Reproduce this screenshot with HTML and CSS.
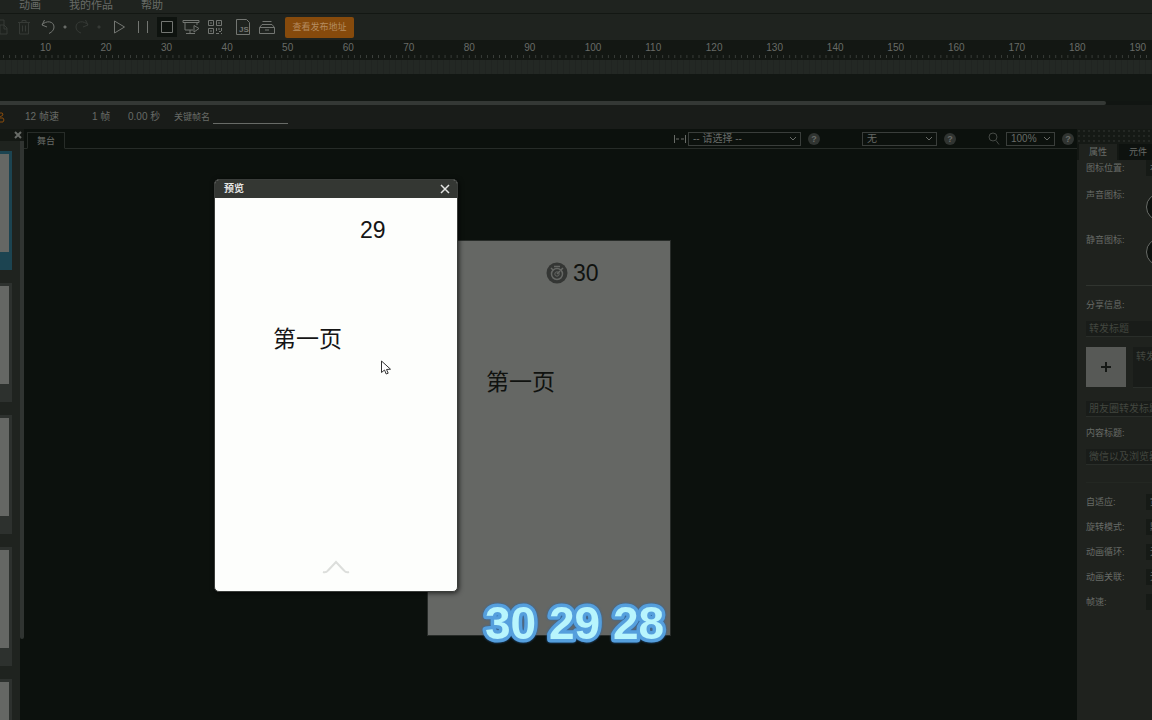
FILE: index.html
```html
<!DOCTYPE html>
<html lang="zh-CN">
<head>
<meta charset="utf-8">
<title>预览</title>
<link rel="stylesheet" href="styles.css">
</head>
<body>
<nav class="menu"><a href="#">动画</a><a href="#">我的作品</a><a href="#">帮助</a></nav>

<div class="toolbar">
  <button class="tool dim" aria-label="复制"><svg width="20" height="20" viewBox="0 0 20 20"><path d="M8 3h6v5M10 8h4l3 3v6h-7zM14 8v4h3"/></svg></button>
  <button class="tool dim" aria-label="删除"><svg width="20" height="20" viewBox="0 0 20 20"><path d="M4 5.500h12M8 5V3.500h4V5M5.500 6v11h9V6M8.500 8.500v6M11.500 8.500v6"/></svg></button>
  <button class="tool" aria-label="撤销"><svg width="20" height="20" viewBox="0 0 20 20"><path d="M6.500 3L4 8l5 2M4 8c4-5 12-4 12 2 0 3-2 5-5 6.500"/></svg></button>
  <span class="dot"></span>
  <button class="tool dim" aria-label="重做"><svg width="20" height="20" viewBox="0 0 20 20"><path d="M13.500 3L16 8l-5 2M16 8C12 3 4 4 4 10c0 3 2 5 5 6"/></svg></button>
  <span class="dot faint"></span>
  <button class="tool play" aria-label="播放"><svg width="20" height="20" viewBox="0 0 20 20"><path d="M5.500 4v12L15.500 10z"/></svg></button>
  <button class="tool" aria-label="暂停"><svg width="20" height="20" viewBox="0 0 20 20"><path d="M5.500 4v12M14.500 4v12"/></svg></button>
  <button class="tool active" aria-label="停止"><svg width="20" height="20" viewBox="0 0 20 20"><path d="M4.500 4.500h11v11h-11z"/></svg></button>
  <button class="tool" aria-label="预览"><svg width="20" height="20" viewBox="0 0 20 20"><path d="M2 3.500h16v2H2zM4 6v7h8M16 6v2M9 13v3.500M5 16.500h9M13 8.500l5 3-5 3.500z"/></svg></button>
  <button class="tool" aria-label="二维码"><svg width="20" height="20" viewBox="0 0 20 20"><path d="M3.500 3.500h5v5h-5zM11.500 3.500h5v5h-5zM3.500 11.500h5v5h-5zM5 6h2M13 6h2M5 14h2M11.500 11v3M14 11v2M16.500 11v3M11 16.500h3M16 16.500h1M14 14.500h2"/></svg></button>
  <button class="tool js" aria-label="脚本"><svg width="20" height="20" viewBox="0 0 20 20"><path d="M3.500 2.500h10l3 3v12h-13z"/><text x="6" y="15">JS</text></svg></button>
  <button class="tool" aria-label="素材"><svg width="20" height="20" viewBox="0 0 20 20"><path d="M5.500 4.500h9M5 7.500h10l2.500 3M2.500 10.500L5 7.500M2.500 10.500h15v6h-15zM8 13h4"/></svg></button>
  <button class="publish">查看发布地址</button>
</div>

<section class="timeline">
  <div class="ruler"><div class="marks">
    <span>10</span><span>20</span><span>30</span><span>40</span><span>50</span><span>60</span><span>70</span><span>80</span><span>90</span><span>100</span><span>110</span><span>120</span><span>130</span><span>140</span><span>150</span><span>160</span><span>170</span><span>180</span><span>190</span>
  </div></div>
  <div class="frames"></div>
  <div class="layer"></div>
  <div class="hscroll"><div class="hthumb"></div></div>
</section>

<div class="info">
  <svg class="onion" width="5" height="12" viewBox="0 0 5 12"><path d="M0 2q3-1 3 2L0 6M0 7q4-1 4 2t-4 2"/></svg>
  <span class="fps">12 帧速</span><span class="frame">1 帧</span><span class="secs">0.00 秒</span>
  <label for="keyname">关键帧名</label><input id="keyname" type="text">
</div>

<main class="work">
  <aside class="pages">
    <div class="pages-head"><button aria-label="关闭"><svg width="8" height="8" viewBox="0 0 8 8"><path d="M1 1l6 6M7 1L1 7"/></svg></button></div>
    <div class="pages-body">
      <div class="cards">
        <div class="card current"><div class="thumb"></div></div>
        <div class="card"><div class="thumb"></div></div>
        <div class="card"><div class="thumb"></div></div>
        <div class="card"><div class="thumb"></div></div>
        <div class="card"><div class="thumb"></div></div>
      </div>
      <div class="vscroll"><div class="vthumb"></div></div>
    </div>
  </aside>

  <section class="center">
    <div class="stagebar">
      <button class="stage-tab">舞台</button>
      <svg class="fit" width="12" height="10" viewBox="0 0 12 10"><path d="M.5 1v8M11.500 1v8M2 5h3M7 5h3"/></svg>
      <div class="pick screen"><select aria-label="屏幕"><option>-- 请选择 --</option></select><svg width="10" height="8" viewBox="0 0 10 8"><path d="M2 2l3 3 3-3"/></svg></div>
      <button class="help">?</button>
      <div class="pick none"><select aria-label="辅助线"><option>无</option></select><svg width="10" height="8" viewBox="0 0 10 8"><path d="M2 2l3 3 3-3"/></svg></div>
      <button class="help">?</button>
      <svg class="lens" width="12" height="14" viewBox="0 0 12 14"><circle cx="5" cy="5" r="4"/><path d="M8 8.500l3 4"/></svg>
      <div class="pick zoom"><select aria-label="缩放"><option>100%</option></select><svg width="10" height="8" viewBox="0 0 10 8"><path d="M2 2l3 3 3-3"/></svg></div>
      <button class="help">?</button>
    </div>
    <div class="canvas">
      <div class="page">
        <div class="counter"><svg width="22" height="22" viewBox="0 0 22 22"><circle class="disc" cx="11" cy="11" r="10.500"/><circle class="ring" cx="11" cy="12" r="5.500"/><circle class="hub" cx="11" cy="12" r="2.200"/><path class="ring" d="M8 4.500h6M5 6l2 2M17 6l-2 2M11 12l3-3"/></svg><span>30</span></div>
        <p class="page-title">第一页</p>
      </div>
    </div>
  </section>

  <aside class="props">
    <div class="grip"></div>
    <div class="tabs"><button class="on">属性</button><button>元件</button></div>
    <form class="form">
      <div class="row first"><label for="pos">图标位置:</label><select id="pos"><option>右上</option></select></div>
      <div class="row icon"><span>声音图标:</span><button type="button" class="round" aria-label="声音图标"></button></div>
      <div class="row icon"><span>静音图标:</span><button type="button" class="round" aria-label="静音图标"></button></div>
      <hr class="rule">
      <label for="share" class="share-label">分享信息:</label>
      <input id="share" type="text" placeholder="转发标题">
      <div class="upload"><button type="button" class="add" aria-label="添加图片"><svg width="10" height="10" viewBox="0 0 10 10"><path d="M5 0v10M0 5h10"/></svg></button><textarea aria-label="转发描述" placeholder="转发描述"></textarea></div>
      <input type="text" aria-label="朋友圈转发标题" placeholder="朋友圈转发标题" class="friends">
      <label for="content" class="content-label">内容标题:</label>
      <input id="content" type="text" placeholder="微信以及浏览器标题">
      <hr class="rule faint">
      <div class="options">
        <div class="row"><label for="o1">自适应:</label><select id="o1"><option>宽度适配</option></select></div>
        <div class="row"><label for="o2">旋转模式:</label><select id="o2"><option>默认</option></select></div>
        <div class="row"><label for="o3">动画循环:</label><select id="o3"><option>无</option></select></div>
        <div class="row"><label for="o4">动画关联:</label><select id="o4"><option>无</option></select></div>
        <div class="row"><label for="o5">帧速:</label><input id="o5" type="text"></div>
      </div>
    </form>
  </aside>
</main>

<div class="dialog" role="dialog" aria-labelledby="dlg">
  <header><h2 id="dlg">预览</h2><button aria-label="关闭"><svg width="10" height="10" viewBox="0 0 10 10"><path d="M1 1l8 8M9 1L1 9"/></svg></button></header>
  <div class="preview">
    <span class="preview-count">29</span>
    <p class="preview-title">第一页</p>
    <svg class="up" width="28" height="14" viewBox="0 0 28 14"><path d="M1 12q3 1 5-1.500L14 2l8 8.500Q24 13 27 12"/></svg>
  </div>
</div>
<svg class="cursor" width="12" height="16" viewBox="0 0 12 16"><path d="M1.500 1v11.500l3-2.500 1.700 4 2-.8L6.500 9.500l4-.3z"/></svg>
<svg class="caption" width="190" height="52" viewBox="0 0 190 52"><text x="5" y="41">30 29 28</text></svg>
</body>
</html>
```
FILE: styles.css
```css
* { box-sizing: border-box; }
body {
  margin: 0;
  height: 100vh;
  display: flex;
  flex-direction: column;
  overflow: hidden;
  position: relative;
  background: #0c110d;
  color: #686b67;
  font: 9px/12px "Liberation Sans", "Noto Sans CJK SC", sans-serif;
}
button, input, select, textarea {
  font: inherit;
  color: inherit;
  background: none;
  border: 0;
  border-radius: 0;
  padding: 0;
  margin: 0;
  appearance: none;
  outline: 0;
}
svg { display: block; fill: none; stroke: currentColor; flex: none; }
h2, p { margin: 0; font-weight: normal; }

.menu {
  flex: none;
  display: flex;
  gap: 28px;
  height: 14px;
  padding-left: 19px;
  background: #1f231f;
  border-bottom: 1px solid #131713;
  font-size: 11px;
  line-height: 10px;
}
.menu a { color: inherit; text-decoration: none; }

.toolbar {
  flex: none;
  display: flex;
  align-items: center;
  gap: 4px;
  height: 26px;
  margin-left: -10px;
  background: #1f231f;
}
.tool { width: 20px; height: 20px; color: #737672; flex: none; }
.tool.dim { color: #363a36; }
.tool.active { background: #0e130f; }
.tool.play { margin-left: 3px; }
.tool.js { margin-left: 4px; }
.tool text { font-size: 8px; font-weight: bold; fill: currentColor; stroke: none; }
.dot { width: 6px; height: 6px; background: radial-gradient(#686b67 1px, transparent 2px); }
.dot.faint { background: radial-gradient(#363a36 1px, transparent 2px); }
.publish {
  width: 69px;
  height: 21px;
  margin-left: 4px;
  border-radius: 2px;
  background: #864a0c;
  color: #b58c60;
}

.timeline { flex: none; overflow: hidden; }
.ruler { height: 20px; background: #131713; overflow: hidden; }
.marks {
  display: grid;
  grid-template-columns: repeat(19, 1fr);
  height: 18px;
  margin: 0 -38px 0 -21px;
  padding-left: 61px;
  line-height: 16px;
  font-size: 10px;
  background: linear-gradient(90deg, #3c403c 1px, transparent 1px) 0 100% / calc(100% / 200) 3px repeat-x;
}
.frames {
  height: 14px;
  background: repeating-linear-gradient(90deg, #232824 0 5px, #202421 5px 6px);
}
.layer { height: 27px; background: #121713; }
.hscroll { height: 4px; background: #111512; }
.hthumb { width: 96%; height: 4px; border-radius: 0 2px 2px 0; background: #343835; }

.info {
  flex: none;
  display: flex;
  align-items: center;
  height: 24px;
  background: #191c19;
  font-size: 10px;
}
.onion { color: #864a0c; }
.fps { width: 67px; margin-left: 20px; }
.frame { width: 36px; }
.secs { width: 46px; }
.info label { font-size: 9px; }
.info input { width: 75px; height: 14px; margin-left: 3px; border-bottom: 1px solid #686b67; }

.work { flex: 1; min-height: 0; display: flex; }
.pages { flex: 0 0 24px; display: flex; flex-direction: column; background: #1f231f; }
.pages-head {
  height: 12px;
  display: flex;
  align-items: center;
  justify-content: flex-end;
  padding-right: 2px;
  background: #141814;
}
.pages-head svg { stroke-width: 2; }
.pages-body { flex: 1; min-height: 0; display: flex; }
.cards { flex: 1; padding-top: 10px; overflow: hidden; }
.card { width: 12px; height: 119px; margin-bottom: 13px; padding: 3px 3px 0 0; background: #2d312e; }
.card.current { background: #1c4451; }
.thumb { height: 98px; background: #656764; }
.vscroll { width: 4px; background: #0c110d; }
.vthumb { height: 86%; background: #303431; border-radius: 0 0 2px 2px; }

.center { flex: 1; min-width: 0; display: flex; flex-direction: column; }
.stagebar {
  flex: none;
  display: flex;
  align-items: center;
  height: 20px;
  padding: 0 3px;
  border-bottom: 1px solid #272c28;
}
.stage-tab {
  align-self: flex-end;
  width: 38px;
  height: 17px;
  margin: 0 auto -1px 0;
  border: 1px solid #272c28;
  border-bottom-color: #0c110d;
  background: #0c110d;
}
.fit { margin-right: 2px; }
.pick { position: relative; flex: none; height: 14px; margin-right: 7px; border: 1px solid #3a3e3b; }
.pick select { display: block; width: 100%; height: 12px; padding-left: 4px; font-size: 10px; line-height: 12px; }
.pick svg { position: absolute; right: 2px; top: 2px; }
.screen { width: 113px; }
.none { width: 75px; }
.zoom { width: 49px; }
.help {
  flex: none;
  width: 12px;
  height: 12px;
  border-radius: 50%;
  background: #303431;
  font-weight: bold;
  line-height: 12px;
}
.screen + .help { margin-right: 42px; }
.none + .help { margin-right: 32px; }
.lens { margin-right: 6px; color: #454945; }
.canvas { flex: 1; position: relative; }
.page {
  position: absolute;
  left: 403px;
  top: 91px;
  width: 244px;
  height: 396px;
  border: 1px solid #282c29;
  background: #656764;
  color: #10120f;
  font-size: 23px;
  line-height: 26px;
}
.counter { display: flex; align-items: center; gap: 5px; margin: 19px 0 0 118px; }
.disc { fill: #343634; stroke: none; }
.ring { stroke: #656764; stroke-width: 1.5; }
.hub { stroke: #656764; }
.page-title { margin: 83px 0 0 58px; }

.props { flex: 0 0 75px; overflow: hidden; background: #1f221e; }
.grip {
  height: 15px;
  background: radial-gradient(circle at 2px 2px, #232723 1px, #151915 1px) 0 0 / 5px 5px;
}
.tabs { display: flex; gap: 2px; width: 96px; height: 16px; padding-left: 2px; background: #131713; }
.tabs button { width: 38px; background: #0e120f; }
.tabs button.on { background: #1f221e; }
.form { width: 220px; padding-left: 9px; }
.form label { display: block; }
.row { display: grid; grid-template-columns: 60px 1fr; align-items: center; height: 25px; }
.row select, .row input { height: 16px; padding-left: 4px; background: #161a16; }
.row.first { height: 16px; }
.row.icon { align-items: start; height: 32px; margin-top: 13px; }
.round { width: 28px; height: 28px; margin-top: 4px; border: 1px solid #686b67; border-radius: 50%; background: #0e120f; }
.rule { height: 1px; margin: 19px 0 13px; border: 0; background: #30342f; }
.rule.faint { margin: 17px 0 6px; background: #232722; }
.form > input, .form textarea {
  display: block;
  width: 100%;
  height: 16px;
  margin-top: 10px;
  padding: 0 3px;
  font-size: 10px;
  background: #191c19;
  border-bottom: 1px solid #292d29;
}
::placeholder { color: #42463f; }
.upload { display: flex; gap: 7px; margin: 10px 0 13px; }
.add { flex: none; width: 40px; height: 40px; display: grid; place-items: center; background: #575956; color: #151815; }
.add svg { stroke-width: 2; }
.form textarea { flex: 1; height: 41px; margin: 0; padding-top: 4px; resize: none; }
.form > .friends { margin-top: 0; }
.content-label { margin-top: 10px; }

.dialog {
  position: absolute;
  left: 214px;
  top: 179px;
  width: 244px;
  height: 413px;
  display: flex;
  flex-direction: column;
  border: 1px solid #3a3d3a;
  border-radius: 5px;
  overflow: hidden;
  background: #fdfefc;
  box-shadow: 1px 1px 5px #000000b0;
}
.dialog header {
  display: flex;
  align-items: center;
  justify-content: space-between;
  height: 18px;
  padding: 0 7px 0 9px;
  background: #343733;
  color: #e4e5e3;
}
.dialog h2 { font-size: 10px; font-weight: bold; }
.dialog header svg { stroke-width: 1.5; }
.preview { flex: 1; display: flex; flex-direction: column; color: #151515; font-size: 23px; line-height: 26px; }
.preview-count { margin: 19px 0 0 145px; }
.preview-title { margin: 83px 0 0 58px; }
.up { margin: auto auto 17px 107px; color: #dcdedb; stroke-width: 2; }
.cursor { position: absolute; left: 380px; top: 360px; fill: #fff; color: #333; }
.caption {
  position: absolute;
  left: 480px;
  top: 598px;
  filter: drop-shadow(0 0 1px #2868ad);
}
.caption text {
  font-size: 46px;
  font-weight: bold;
  fill: #b8f5fd;
  stroke: #559fdd;
  stroke-width: 7px;
  stroke-linejoin: round;
  paint-order: stroke fill;
}
```
